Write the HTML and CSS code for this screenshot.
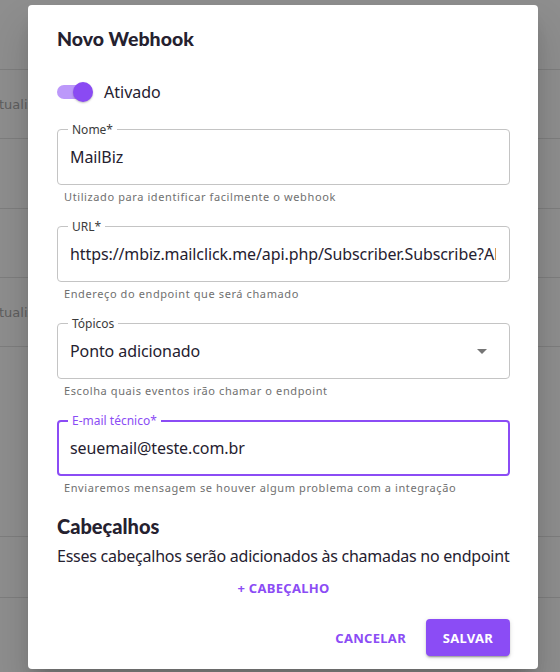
FILE: index.html
```html
<!DOCTYPE html>
<html lang="pt-BR">
<head>
<meta charset="utf-8">
<title>Novo Webhook</title>
<link rel="stylesheet" href="styles.css">
</head>
<body>
<div class="backdrop">
  <div class="row r1"></div>
  <div class="row r2"><span class="bgtext">tualizado</span></div>
  <div class="row r3"></div>
  <div class="row r4"></div>
  <div class="row r5"><span class="bgtext">tualizado</span></div>
  <div class="row r6"></div>
  <div class="row r7"></div>
</div>
<div class="dialog">
  <h2 class="title">Novo Webhook</h2>
  <div class="toggle-row">
    <span class="switch"><span class="track"></span><span class="thumb"></span></span>
    <span class="toggle-label">Ativado</span>
  </div>

  <div class="group">
    <div class="field">
      <span class="label">Nome*</span>
      <span class="value">MailBiz</span>
    </div>
    <div class="helper">Utilizado para identificar facilmente o webhook</div>
  </div>

  <div class="group">
    <div class="field">
      <span class="label">URL*</span>
      <span class="value">https://mbiz.mailclick.me/api.php/Subscriber.Subscribe?APIKey=</span>
    </div>
    <div class="helper">Endereço do endpoint que será chamado</div>
  </div>

  <div class="group">
    <div class="field select">
      <span class="label">Tópicos</span>
      <span class="value">Ponto adicionado</span>
      <svg class="arrow" width="10" height="5" viewBox="0 0 10 5"><path d="M0 0L5 5L10 0Z" fill="#757575"/></svg>
    </div>
    <div class="helper">Escolha quais eventos irão chamar o endpoint</div>
  </div>

  <div class="group last">
    <div class="field focused">
      <span class="label">E-mail técnico*</span>
      <span class="value">seuemail@teste.com.br</span>
    </div>
    <div class="helper">Enviaremos mensagem se houver algum problema com a integração</div>
  </div>

  <h3 class="section">Cabeçalhos</h3>
  <p class="desc">Esses cabeçalhos serão adicionados às chamadas no endpoint</p>
  <div class="add-row"><span class="add">+ CABEÇALHO</span></div>

  <div class="actions">
    <span class="btn-text">CANCELAR</span>
    <span class="btn-primary">SALVAR</span>
  </div>
</div>
</body>
</html>
```
FILE: styles.css
```css
html, body {
  margin: 0;
  padding: 0;
}
body {
  width: 560px;
  height: 672px;
  overflow: hidden;
  background: #8e8e8e;
  font-family: "Noto Sans", sans-serif;
  position: relative;
}
.backdrop {
  display: flex;
  flex-direction: column;
}
.row {
  border-bottom: 1px solid #7e7e7e;
  display: flex;
  align-items: center;
  overflow: hidden;
}
.r1 { height: 69px; }
.r2 { height: 68px; }
.r3 { height: 69px; }
.r4 { height: 68px; }
.r5 { height: 68px; }
.r6 { height: 189px; }
.r7 { height: 60px; }
.bgtext {
  font-family: "DejaVu Sans", sans-serif;
  font-size: 13px;
  color: #5e5e5e;
  margin-left: -1px;
}
.dialog {
  position: absolute;
  left: 28px;
  top: 5px;
  width: 510px;
  height: 664px;
  box-sizing: border-box;
  background: #fff;
  border-radius: 4px;
  padding: 20px 28px 0 29px;
  box-shadow: 0 11px 15px -7px rgba(0,0,0,0.2), 0 24px 38px 3px rgba(0,0,0,0.14);
}
.title {
  margin: 0;
  font-family: "Lato", sans-serif;
  font-weight: 900;
  font-size: 19.5px;
  line-height: 28px;
  color: #25212f;
}
.toggle-row {
  display: flex;
  align-items: center;
  height: 24px;
  margin-top: 27px;
  margin-bottom: 25px;
}
.switch {
  position: relative;
  width: 37px;
  height: 20px;
  display: inline-block;
}
.track {
  position: absolute;
  left: 0;
  top: 3px;
  width: 34px;
  height: 14px;
  border-radius: 7px;
  background: #bc98fa;
}
.thumb {
  position: absolute;
  left: 16px;
  top: 0;
  width: 20px;
  height: 20px;
  border-radius: 50%;
  background: #8a4af3;
  box-shadow: 0 1px 2px rgba(0,0,0,0.25);
}
.toggle-label {
  margin-left: 10px;
  font-size: 16px;
  color: #25212f;
}
.group {
  margin-bottom: 21px;
}
.group.last {
  margin-bottom: 16px;
}
.field {
  position: relative;
  height: 56px;
  box-sizing: border-box;
  border: 1px solid #c4c4c4;
  border-radius: 4px;
  display: flex;
  align-items: center;
  padding: 0 13px 0 12px;
}
.field.focused {
  border: 2px solid #8b4cf5;
  padding-left: 11px;
}
.label {
  position: absolute;
  left: 10px;
  top: -8px;
  padding: 0 4px;
  background: #fff;
  font-size: 12px;
  line-height: 16px;
  color: #3b3b3b;
}
.focused .label {
  left: 9px;
  top: -9px;
  color: #8b4cf5;
}
.value {
  font-size: 16px;
  letter-spacing: -0.1px;
  color: #25212f;
  white-space: nowrap;
  overflow: hidden;
  flex: 1;
}
.arrow {
  margin-right: 9px;
}
.helper {
  margin: 4px 0 0 7px;
  font-size: 11px;
  line-height: 16px;
  letter-spacing: 0.6px;
  color: #707070;
}
.section {
  margin: 0;
  font-family: "Lato", sans-serif;
  font-weight: 900;
  font-size: 20px;
  line-height: 28px;
  color: #25212f;
}
.desc {
  margin: 4px 0 0;
  font-size: 16px;
  line-height: 24px;
  letter-spacing: -0.25px;
  white-space: nowrap;
  color: #25212f;
}
.add-row {
  display: flex;
  justify-content: center;
  margin-top: 10px;
  height: 20px;
  align-items: center;
}
.add {
  font-size: 13px;
  font-weight: 700;
  letter-spacing: 0.3px;
  color: #8b4cf5;
}
.actions {
  display: flex;
  justify-content: flex-end;
  align-items: center;
  margin-top: 21px;
  gap: 12px;
}
.btn-text {
  padding: 0 8px;
  font-size: 13px;
  font-weight: 700;
  letter-spacing: 0.3px;
  color: #8b4cf5;
}
.btn-primary {
  height: 37px;
  width: 84px;
  box-sizing: border-box;
  display: flex;
  align-items: center;
  justify-content: center;
  background: #8b4cf5;
  color: #fff;
  border-radius: 4px;
  font-size: 13px;
  font-weight: 700;
  letter-spacing: 0.3px;
  box-shadow: 0 3px 1px -2px rgba(0,0,0,0.2), 0 2px 2px 0 rgba(0,0,0,0.14), 0 1px 5px 0 rgba(0,0,0,0.12);
}
```
